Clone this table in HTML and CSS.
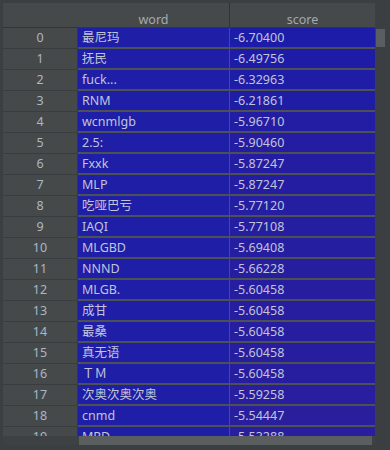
FILE: index.html
```html
<!DOCTYPE html>
<html>
<head>
<meta charset="utf-8">
<link rel="stylesheet" href="styles.css">
</head>
<body>
<div class="frame">
  <div class="view">
    <div class="grid">
      <div class="hd hd-idx"></div>
      <div class="hd hd-word">word</div>
      <div class="hd hd-score">score</div>

      <div class="idx">0</div><div class="word">最尼玛</div><div class="score" style="background:#1c1ca9">-6.70400</div>
      <div class="idx">1</div><div class="word">抚民</div><div class="score" style="background:#1e1ca7">-6.49756</div>
      <div class="idx">2</div><div class="word">fuck...</div><div class="score" style="background:#1f1ca6">-6.32963</div>
      <div class="idx">3</div><div class="word">RNM</div><div class="score" style="background:#201da5">-6.21861</div>
      <div class="idx">4</div><div class="word">wcnmlgb</div><div class="score" style="background:#231da3">-5.96710</div>
      <div class="idx">5</div><div class="word">2.5:</div><div class="score" style="background:#241da2">-5.90460</div>
      <div class="idx">6</div><div class="word">Fxxk</div><div class="score" style="background:#241da2">-5.87247</div>
      <div class="idx">7</div><div class="word">MLP</div><div class="score" style="background:#241da2">-5.87247</div>
      <div class="idx">8</div><div class="word">吃哑巴亏</div><div class="score" style="background:#251ea1">-5.77120</div>
      <div class="idx">9</div><div class="word">IAQI</div><div class="score" style="background:#251ea1">-5.77108</div>
      <div class="idx">10</div><div class="word">MLGBD</div><div class="score" style="background:#261ea0">-5.69408</div>
      <div class="idx">11</div><div class="word">NNND</div><div class="score" style="background:#271e9f">-5.66228</div>
      <div class="idx">12</div><div class="word">MLGB.</div><div class="score" style="background:#271e9f">-5.60458</div>
      <div class="idx">13</div><div class="word">成甘</div><div class="score" style="background:#271e9f">-5.60458</div>
      <div class="idx">14</div><div class="word">最桑</div><div class="score" style="background:#271e9f">-5.60458</div>
      <div class="idx">15</div><div class="word">真无语</div><div class="score" style="background:#271e9f">-5.60458</div>
      <div class="idx">16</div><div class="word">ＴＭ</div><div class="score" style="background:#271e9f">-5.60458</div>
      <div class="idx">17</div><div class="word">次奥次奥次奥</div><div class="score" style="background:#281e9e">-5.59258</div>
      <div class="idx">18</div><div class="word">cnmd</div><div class="score" style="background:#291f9d">-5.54447</div>
      <div class="idx">19</div><div class="word">MRD</div><div class="score" style="background:#291f9d">-5.53288</div>
    </div>
    <div class="vscroll"><div class="vthumb"></div></div>
  </div>
  <div class="hscroll"><div class="hthumb"></div></div>
</div>
</body>
</html>
```

FILE: styles.css
```css
html, body {
  margin: 0;
  padding: 0;
  background: #3c3f41;
  width: 390px;
  height: 450px;
  overflow: hidden;
}

.frame {
  padding: 3px 0 0 3px;
  font-family: "Noto Sans", "Noto Sans CJK SC", sans-serif;
  font-size: 12.5px;
}

.view {
  display: flex;
  height: 433px;
}

.grid {
  width: 372px;
  height: 433px;
  overflow: hidden;
  display: grid;
  grid-template-columns: 75px 152px 145px;
  grid-auto-rows: 21px;
  grid-template-rows: 25px;
  background: #45494a;
}

.hd {
  box-sizing: border-box;
  background: #45494a;
  border-bottom: 1px solid #333537;
  color: #a4aab0;
  display: flex;
  align-items: flex-end;
  justify-content: center;
  padding-bottom: 0;
  line-height: 15px;
}

.hd-word {
  border-right: 1px solid #313335;
}

.idx, .word, .score {
  box-sizing: border-box;
  display: flex;
  align-items: center;
  line-height: 16px;
  white-space: nowrap;
}

.idx {
  justify-content: center;
  background: #45494a;
  color: #a9b7c6;
  border-bottom: 1px solid #3a3d3f;
  border-right: 1px solid #36393b;
}

.word, .score {
  padding-left: 4px;
  color: #c2c4d8;
  border-bottom: 2px solid #4e5154;
}

.word {
  background: #1e1ea7;
  border-right: 1px solid #4e5154;
}

.score {
  background: #241da2;
}

.vscroll {
  width: 15px;
  height: 433px;
  box-sizing: border-box;
  padding: 26px 0 0 1px;
  background: #3c3f41;
}

.vthumb {
  width: 9px;
  height: 18px;
  background: #5b5e60;
}

.hscroll {
  width: 372px;
  height: 9px;
  background: #3e4143;
}

.hthumb {
  margin-left: 76px;
  width: 293px;
  height: 9px;
  background: #5b5e5f;
}
```
